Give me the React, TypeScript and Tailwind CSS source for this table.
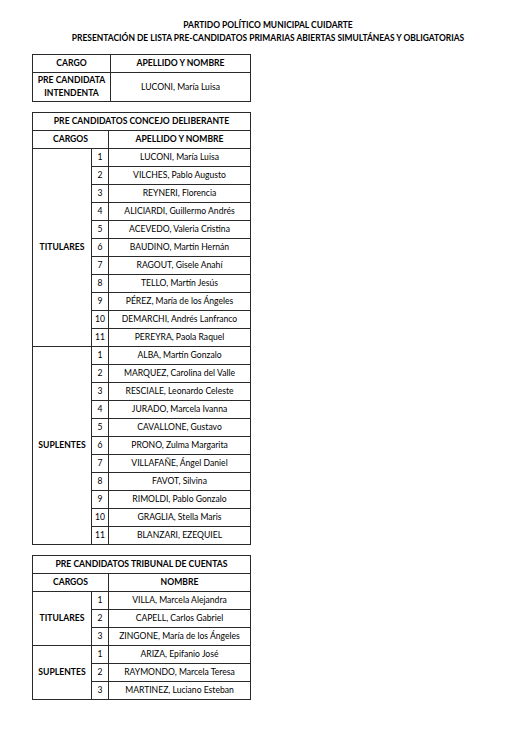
import React from 'react';

const concejoTitulares = [
  'LUCONI, María Luisa',
  'VILCHES, Pablo Augusto',
  'REYNERI, Florencia',
  'ALICIARDI, Guillermo Andrés',
  'ACEVEDO, Valeria Cristina',
  'BAUDINO, Martín Hernán',
  'RAGOUT, Gisele Anahí',
  'TELLO, Martín Jesús',
  'PÉREZ, María de los Ángeles',
  'DEMARCHI, Andrés Lanfranco',
  'PEREYRA, Paola Raquel',
];

const concejoSuplentes = [
  'ALBA, Martín Gonzalo',
  'MARQUEZ, Carolina del Valle',
  'RESCIALE, Leonardo Celeste',
  'JURADO, Marcela Ivanna',
  'CAVALLONE, Gustavo',
  'PRONO, Zulma Margarita',
  'VILLAFAÑE, Ángel Daniel',
  'FAVOT, Silvina',
  'RIMOLDI, Pablo Gonzalo',
  'GRAGLIA, Stella Maris',
  'BLANZARI, EZEQUIEL',
];

const tribunalTitulares = ['VILLA, Marcela Alejandra', 'CAPELL, Carlos Gabriel', 'ZINGONE, María de los Ángeles'];
const tribunalSuplentes = ['ARIZA, Epifanio José', 'RAYMONDO, Marcela Teresa', 'MARTINEZ, Luciano Esteban'];

const cell = 'border border-[#2a2a2a] p-0 text-center align-middle';

const Group: React.FC<{ label: string; names: string[] }> = ({ label, names }) => (
  <>
    {names.map((name, i) => (
      <tr key={name} className="h-[18px]">
        {i === 0 && (
          <td rowSpan={names.length} className={`${cell} font-bold`}>
            {label}
          </td>
        )}
        <td className={cell}>{i + 1}</td>
        <td className={cell}>{name}</td>
      </tr>
    ))}
  </>
);

const ListTable: React.FC<{ title: string; nameHeader: string; groups: { label: string; names: string[] }[] }> = ({ title, nameHeader, groups }) => (
  <table className="w-[219px] table-fixed border-collapse border border-[#2a2a2a]">
    <colgroup>
      <col className="w-[59px]" />
      <col className="w-[17px]" />
      <col />
    </colgroup>
    <tbody>
      <tr className="h-[18px]">
        <td colSpan={3} className={`${cell} font-bold`}>{title}</td>
      </tr>
      <tr className="h-[18px]">
        <td colSpan={2} className={`${cell} font-bold`}>CARGOS</td>
        <td className={`${cell} font-bold`}>{nameHeader}</td>
      </tr>
      {groups.map((g) => (
        <Group key={g.label} label={g.label} names={g.names} />
      ))}
    </tbody>
  </table>
);

export default function App() {
  return (
    <div className="w-[530px] min-h-[750px] bg-white text-black text-[8.6px] leading-[11px] font-['Lato','Liberation_Sans',sans-serif]">
      <div className="pt-[19px] pl-[6px] text-center font-bold text-[8.45px] leading-[13px]">
        <div>PARTIDO POLÍTICO MUNICIPAL CUIDARTE</div>
        <div>PRESENTACIÓN DE LISTA PRE-CANDIDATOS PRIMARIAS ABIERTAS SIMULTÁNEAS Y OBLIGATORIAS</div>
      </div>

      <div className="pl-[32px] pt-[9px] flex flex-col gap-[10px]">
        <table className="w-[219px] table-fixed border-collapse border border-[#2a2a2a]">
          <colgroup>
            <col className="w-[78px]" />
            <col />
          </colgroup>
          <tbody>
            <tr className="h-[18px]">
              <td className={`${cell} font-bold`}>CARGO</td>
              <td className={`${cell} font-bold`}>APELLIDO Y NOMBRE</td>
            </tr>
            <tr className="h-[29px]">
              <td className={`${cell} font-bold leading-[13px]`}>
                PRE CANDIDATA
                <br />
                INTENDENTA
              </td>
              <td className={cell}>LUCONI, María Luisa</td>
            </tr>
          </tbody>
        </table>

        <ListTable
          title="PRE CANDIDATOS CONCEJO DELIBERANTE"
          nameHeader="APELLIDO Y NOMBRE"
          groups={[
            { label: 'TITULARES', names: concejoTitulares },
            { label: 'SUPLENTES', names: concejoSuplentes },
          ]}
        />

        <ListTable
          title="PRE CANDIDATOS TRIBUNAL DE CUENTAS"
          nameHeader="NOMBRE"
          groups={[
            { label: 'TITULARES', names: tribunalTitulares },
            { label: 'SUPLENTES', names: tribunalSuplentes },
          ]}
        />
      </div>
    </div>
  );
}
